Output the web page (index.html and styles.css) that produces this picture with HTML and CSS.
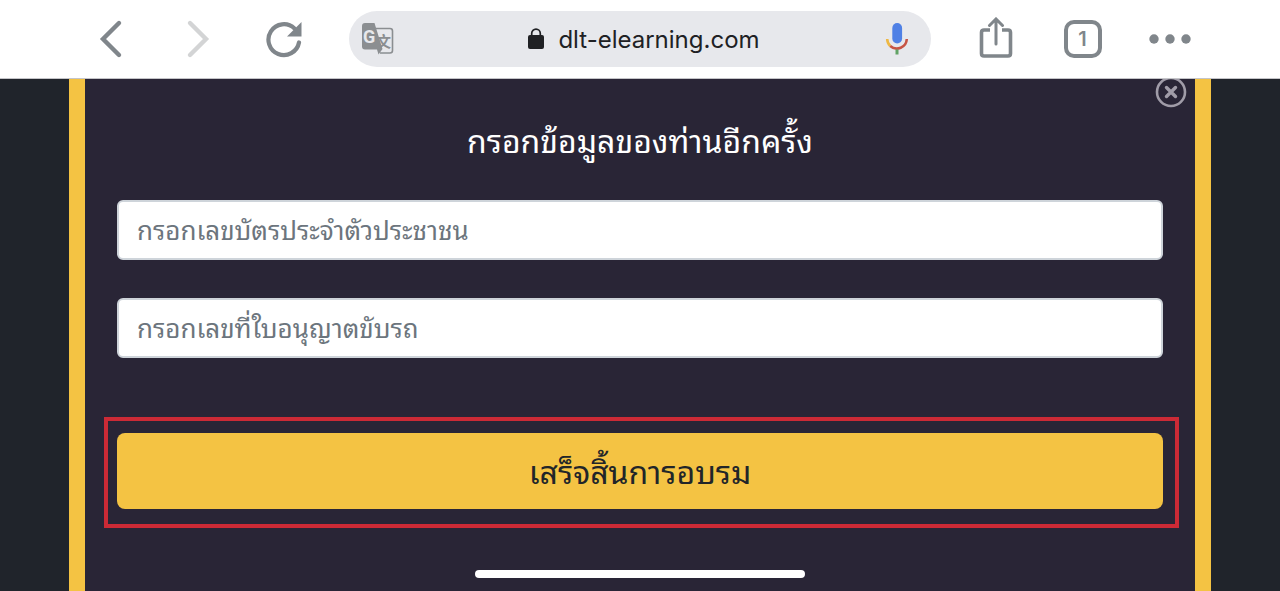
FILE: index.html
```html
<!DOCTYPE html>
<html lang="th">
<head>
    <meta charset="UTF-8">
    <meta name="viewport" content="width=device-width, initial-scale=1.0">
    <title>dlt-elearning.com</title>
    <link rel="stylesheet" href="styles.css">
</head>
<body>
    <header class="toolbar">
        <button type="button" class="tool" aria-label="Back">
            <svg width="24" height="40" viewBox="0 0 24 40"><path d="M20 4 L4 20 L20 36" fill="none" stroke="#80868b" stroke-width="4.4" stroke-linecap="round"/></svg>
        </button>
        <button type="button" class="tool" aria-label="Forward" disabled>
            <svg width="24" height="40" viewBox="0 0 24 40"><path d="M4 4 L20 20 L4 36" fill="none" stroke="#d3d4d5" stroke-width="4.4" stroke-linecap="round"/></svg>
        </button>
        <button type="button" class="tool" aria-label="Reload">
            <svg width="40" height="40" viewBox="0 0 40 40">
                <path d="M34 23.500 A15.400 15.400 0 1 1 29.500 9.500" fill="none" stroke="#80868b" stroke-width="4.2" stroke-linecap="round"/>
                <path d="M36.500 3 V17.500 H22 Z" fill="#80868b"/>
            </svg>
        </button>

        <div class="address">
            <button type="button" class="address-icon" aria-label="Translate">
                <svg width="34" height="34" viewBox="0 0 34 34">
                    <path d="M15 6.500 H29 Q31.500 6.500 31.500 9 V28.500 Q31.500 31 29 31 H19" fill="none" stroke="#8b8e91" stroke-width="1.6"/>
                    <path d="M4 1 H13.500 L21.500 27 L17.500 32.500 L16 27.500 H4 Q1 27.500 1 24.500 V4 Q1 1 4 1 Z" fill="#8b8e91"/>
                    <text x="2" y="20.500" class="icon-g">G</text>
                    <text x="15" y="25" class="icon-wen">文</text>
                </svg>
            </button>
            <div class="site">
                <svg width="16" height="22" viewBox="0 0 16 22">
                    <path d="M3.700 9 V5.500 a4.300 4.300 0 0 1 8.600 0 V9" fill="none" stroke="#202124" stroke-width="1.700"/>
                    <rect x="0" y="7" width="16" height="14" rx="2" fill="#202124"/>
                </svg>
                <span>dlt-elearning.com</span>
            </div>
            <button type="button" class="address-icon" aria-label="Voice search">
                <svg width="24" height="34" viewBox="0 0 24 34">
                    <rect x="7.300" y="1" width="9.800" height="20.500" rx="4.900" fill="#4f80e5"/>
                    <path d="M2.200 17 A10 10 0 0 0 5.200 24" fill="none" stroke="#eeb844" stroke-width="2.600"/>
                    <path d="M5.200 24 A10 10 0 0 0 21.800 17" fill="none" stroke="#c75444" stroke-width="2.600"/>
                    <path d="M12 27.500 V32.500" stroke="#61a365" stroke-width="3"/>
                </svg>
            </button>
        </div>

        <button type="button" class="tool" aria-label="Share">
            <svg width="36" height="44" viewBox="0 0 36 44">
                <path d="M12 13 H6 Q3.500 13 3.500 15.500 V36.500 Q3.500 39 6 39 H30 Q32.500 39 32.500 36.500 V15.500 Q32.500 13 30 13 H24" fill="none" stroke="#80868b" stroke-width="3.600"/>
                <path d="M18 27 V2.500 M11.500 8.500 L18 2 L24.500 8.500" fill="none" stroke="#80868b" stroke-width="3" stroke-linecap="round"/>
            </svg>
        </button>
        <button type="button" class="tool" aria-label="Tabs">
            <span class="tab-count">1</span>
        </button>
        <button type="button" class="tool" aria-label="More">
            <svg width="42" height="10" viewBox="0 0 42 10" fill="#80868b">
                <circle cx="5" cy="5" r="4.700"/>
                <circle cx="21" cy="5" r="4.700"/>
                <circle cx="37" cy="5" r="4.700"/>
            </svg>
        </button>
    </header>

    <main class="panel">
        <button type="button" class="close" aria-label="ปิด">
            <svg width="32" height="32" viewBox="0 0 32 32" fill="none" stroke="#a09ca8">
                <circle cx="16" cy="16" r="14" stroke-width="2.600"/>
                <path d="M11.500 11.500 L20.500 20.500 M20.500 11.500 L11.500 20.500" stroke-width="3.400" stroke-linecap="round"/>
            </svg>
        </button>
        <form class="form">
            <h1>กรอกข้อมูลของท่านอีกครั้ง</h1>
            <input type="text" name="citizen_id" aria-label="กรอกเลขบัตรประจำตัวประชาชน" placeholder="กรอกเลขบัตรประจำตัวประชาชน">
            <input type="text" name="license_no" aria-label="กรอกเลขที่ใบอนุญาตขับรถ" placeholder="กรอกเลขที่ใบอนุญาตขับรถ">
            <div class="highlight">
                <button type="submit" class="submit">เสร็จสิ้นการอบรม</button>
            </div>
        </form>
    </main>

    <div class="home-bar"></div>
</body>
</html>
```
FILE: styles.css
```css
* {
    box-sizing: border-box;
}
body {
    margin: 0;
    min-height: 100vh;
    display: flex;
    flex-direction: column;
    background-color: #20242b;
    font-family: "Noto Sans Thai Looped", Loma, "Noto Sans Thai", "Noto Sans", sans-serif;
}
button {
    border: none;
    padding: 0;
    background: none;
    font-family: inherit;
    cursor: pointer;
}
svg {
    display: block;
}
.toolbar {
    display: flex;
    align-items: center;
    height: 79px;
    padding: 0 67px;
    background-color: white;
    border-bottom: 1px solid #c4c4c8;
}
.tool {
    width: 87px;
    height: 56px;
    display: flex;
    align-items: center;
    justify-content: center;
}
.address {
    flex: 1;
    display: flex;
    align-items: center;
    justify-content: space-between;
    height: 56px;
    margin: 0 21px;
    padding: 0 22px 0 12px;
    border-radius: 28px;
    background-color: #e7e8ec;
}
.address-icon {
    display: flex;
    width: 34px;
}
.address-icon:last-child {
    width: 24px;
}
.site {
    display: flex;
    align-items: center;
    gap: 14px;
    padding-left: 8px;
    font-family: Inter, sans-serif;
    font-size: 24px;
    color: #202124;
}
.icon-g {
    font: bold 18px Roboto, sans-serif;
    fill: #e7e8ec;
}
.icon-wen {
    font: bold 15px "Noto Sans CJK SC", sans-serif;
    fill: #8b8e91;
}
.tab-count {
    width: 38px;
    height: 38px;
    border: 4px solid #80868b;
    border-radius: 10px;
    font: 600 20px/30px Inter, sans-serif;
    color: #80868b;
}
.panel {
    flex: 1;
    position: relative;
    margin: 0 69px;
    padding: 34px 32px;
    border: solid #f4c343;
    border-width: 0 16px;
    background-color: #292536;
    overflow: hidden;
}
.close {
    position: absolute;
    top: -3px;
    right: 8px;
}
.form {
    display: flex;
    flex-direction: column;
}
.form h1 {
    margin: 0 0 35px;
    font-size: 32px;
    font-weight: normal;
    line-height: 52px;
    text-align: center;
    color: white;
}
.form input {
    width: 100%;
    height: 60px;
    margin-bottom: 38px;
    padding: 0 18px 4px;
    border: 2px solid #ced4da;
    border-radius: 6px;
    background-color: white;
    font-family: inherit;
    font-size: 26px;
}
.form input::placeholder {
    color: #6c757d;
    opacity: 1;
}
.highlight {
    margin: 21px -16px 0 -13px;
    padding: 12px 12px 15px 9px;
    border: 4px solid #cc2a36;
}
.submit {
    display: block;
    width: 100%;
    height: 76px;
    padding-bottom: 4px;
    border-radius: 8px;
    background-color: #f4c343;
    font-size: 32px;
    color: #212529;
}
.home-bar {
    position: fixed;
    bottom: 13px;
    left: 50%;
    width: 330px;
    height: 8px;
    margin-left: -165px;
    border-radius: 4px;
    background-color: white;
}
```
